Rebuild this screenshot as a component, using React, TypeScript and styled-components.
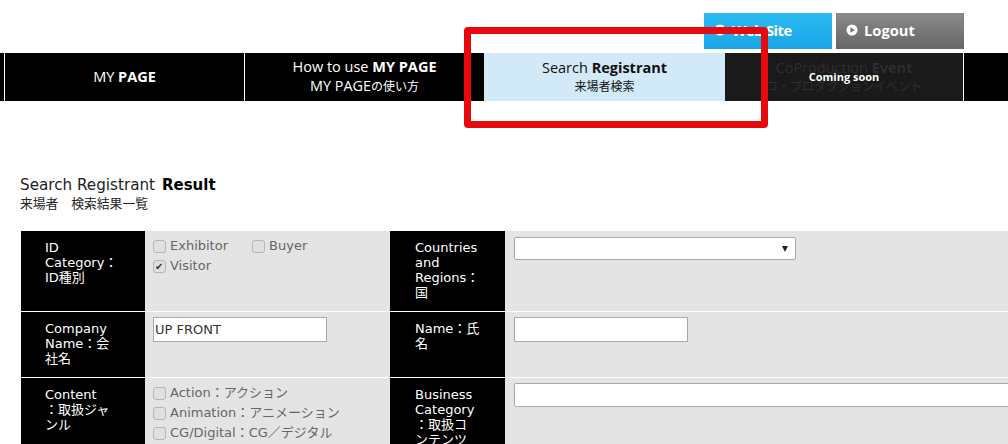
import React from "react";
import styled, { createGlobalStyle } from "styled-components";

const Global = createGlobalStyle`
  html, body { margin: 0; padding: 0; background: #fff; height: 444px; overflow: hidden; }
  #root { height: 444px; overflow: hidden; }
`;

const Page = styled.div`
  position: relative;
  width: 1008px;
  height: 444px;
  overflow: hidden;
  font-family: "DejaVu Sans", "Noto Sans CJK JP", sans-serif;
`;

const TopBar = styled.div`
  display: flex;
  justify-content: flex-end;
  gap: 4px;
  height: 36px;
  padding: 13px 44px 4px 0;
`;

const TopButton = styled.a<{ $from: string; $to: string; $tight?: boolean }>`
  width: 128px;
  height: 36px;
  box-sizing: border-box;
  padding: 0 0 2px 10px;
  display: flex;
  align-items: center;
  gap: 6px;
  background: linear-gradient(${(p) => p.$from}, ${(p) => p.$to});
  color: #fff;
  font: 700 14.7px "Open Sans", "Noto Sans", sans-serif;
  letter-spacing: ${(p) => (p.$tight ? "-0.5px" : "0")};
`;

const Nav = styled.nav`
  display: flex;
  height: 48px;
  background: #000;
  padding-left: 4px;
`;

const NavItem = styled.div<{ $active?: boolean; $muted?: boolean; $w: number }>`
  position: relative;
  flex: 0 0 ${(p) => p.$w}px;
  box-sizing: border-box;
  height: 48px;
  padding-bottom: 1px;
  display: flex;
  flex-direction: column;
  align-items: center;
  justify-content: center;
  border-left: ${(p) => (p.$active || p.$muted ? "0" : "1px solid #fff")};
  background: ${(p) => (p.$active ? "#d2e9f8" : p.$muted ? "#1a1a1a" : "#000")};
  color: ${(p) => (p.$active ? "#111" : p.$muted ? "#2e2e2e" : "#fff")};
  font-family: "Open Sans", "Noto Sans CJK JP", sans-serif;
`;

const NavEnd = styled.div`
  flex: 1;
  border-left: 1px solid #fff;
`;

const NavTitle = styled.span`
  font-size: 14.5px;
  line-height: 20px;
  white-space: nowrap;
  b { font-weight: 700; }
`;

const NavSub = styled.span`
  font-size: 12px;
  line-height: 18px;
  white-space: nowrap;
`;

const NavSubLatin = styled.span`
  font-size: 14.4px;
`;

const Soon = styled.span`
  position: absolute;
  top: 17px;
  left: 0;
  right: 0;
  text-align: center;
  color: #fff;
  font-size: 11px;
  line-height: 14px;
  font-weight: 700;
`;

const Highlight = styled.div`
  position: absolute;
  left: 464px;
  top: 27px;
  width: 304px;
  height: 101px;
  box-sizing: border-box;
  border: 7px solid #e60a0f;
  border-radius: 4px;
`;

const Heading = styled.div`
  padding: 75px 0 0 20px;
  color: #222;
`;

const HeadingTitle = styled.div`
  font-size: 15.2px;
  line-height: 19px;
  b { font-size: 15px; color: #000; margin-left: 2px; }
`;

const HeadingSub = styled.div`
  font-family: "Noto Sans CJK JP", sans-serif;
  font-size: 12.8px;
  line-height: 18px;
  margin-top: -1px;
`;

const FormGrid = styled.div`
  display: grid;
  grid-template-columns: 124px 245px 115px 700px;
  grid-template-rows: 80px 65px 100px;
  row-gap: 1px;
  margin: 19px 0 0 21px;
  width: 1184px;
`;

const LabelCell = styled.div<{ $right?: boolean }>`
  background: #000;
  color: #fff;
  box-sizing: border-box;
  padding: 9px 8px 0 ${(p) => (p.$right ? 25 : 24)}px;
  font-size: 13px;
  line-height: 15px;
  overflow: hidden;
`;

const FieldCell = styled.div<{ $wide?: boolean; $top?: number }>`
  background: #e4e4e4;
  box-sizing: border-box;
  padding: ${(p) => p.$top ?? 5}px 8px 0 ${(p) => (p.$wide ? 9 : 8)}px;
  color: #666;
  font-size: 13px;
  line-height: 20px;
`;

const CheckRow = styled.div`
  display: flex;
  gap: 24px;
  height: 20px;
`;

const CheckLabel = styled.label`
  display: inline-flex;
  align-items: center;
  gap: 4px;
  white-space: nowrap;
`;

const Box = styled.input.attrs({ type: "checkbox", readOnly: true })`
  appearance: none;
  margin: 0;
  width: 13px;
  height: 13px;
  box-sizing: border-box;
  border: 1px solid #b5b5b5;
  border-radius: 3px;
  background: #e0e0e0;
  position: relative;
  &:checked::after {
    content: "✔";
    position: absolute;
    left: 1px;
    top: 0;
    font-size: 10px;
    line-height: 11px;
    color: #333;
  }
`;

const TextBox = styled.input.attrs({ type: "text", readOnly: true })<{ $w: number }>`
  display: block;
  width: ${(p) => p.$w}px;
  height: 25px;
  box-sizing: border-box;
  border: 1px solid #a9a9a9;
  background: #fff;
  padding: 0 1px;
  margin: 0;
  color: #333;
  font: 13px "DejaVu Sans", sans-serif;
  outline: none;
`;

const Wide = styled(TextBox)`
  height: 24px;
  border-radius: 2px;
`;

const SelectBox = styled.div`
  position: relative;
  width: 282px;
  height: 23px;
  box-sizing: border-box;
  border: 1px solid #a9a9a9;
  border-radius: 2px;
  background: #fff;
  &::after {
    content: "";
    position: absolute;
    right: 7px;
    top: 8px;
    border-left: 3px solid transparent;
    border-right: 3px solid transparent;
    border-top: 6px solid #222;
  }
`;

const Check = ({ label, checked }: { label: string; checked?: boolean }) => (
  <CheckLabel>
    <Box defaultChecked={checked} />
    {label}
  </CheckLabel>
);

const PlayIcon = ({ fill }: { fill: string }) => (
  <svg width="12" height="12" viewBox="0 0 12 12">
    <circle cx="6" cy="6" r="5.5" fill="#fff" />
    <path d="M4.4 3.2 L9 6 L4.4 8.8 Z" fill={fill} />
  </svg>
);

export default function App() {
  return (
    <Page>
      <Global />
      <TopBar>
        <TopButton $from="#2abcf2" $to="#1aa4e6" $tight>
          <PlayIcon fill="#1eaeea" />
          Web Site
        </TopButton>
        <TopButton $from="#8a8a8a" $to="#666666">
          <PlayIcon fill="#777" />
          Logout
        </TopButton>
      </TopBar>
      <Nav>
        <NavItem $w={240}>
          <NavTitle>
            MY <b>PAGE</b>
          </NavTitle>
        </NavItem>
        <NavItem $w={240}>
          <NavTitle>
            How to use <b>MY PAGE</b>
          </NavTitle>
          <NavSub>
            <NavSubLatin>MY PAGE</NavSubLatin>の使い方
          </NavSub>
        </NavItem>
        <NavItem $active $w={241}>
          <NavTitle>
            Search <b>Registrant</b>
          </NavTitle>
          <NavSub>来場者検索</NavSub>
        </NavItem>
        <NavItem $muted $w={238}>
          <NavTitle>
            CoProduction <b>Event</b>
          </NavTitle>
          <NavSub>コ・プロダクションイベント</NavSub>
          <Soon>Coming soon</Soon>
        </NavItem>
        <NavEnd />
      </Nav>
      <Heading>
        <HeadingTitle>
          Search Registrant <b>Result</b>
        </HeadingTitle>
        <HeadingSub>来場者　検索結果一覧</HeadingSub>
      </Heading>
      <FormGrid>
        <LabelCell>
          ID
          <br />
          Category：
          <br />
          ID種別
        </LabelCell>
        <FieldCell>
          <CheckRow>
            <Check label="Exhibitor" />
            <Check label="Buyer" />
          </CheckRow>
          <CheckRow>
            <Check label="Visitor" checked />
          </CheckRow>
        </FieldCell>
        <LabelCell $right>
          Countries
          <br />
          and
          <br />
          Regions：
          <br />国
        </LabelCell>
        <FieldCell $wide $top={6}>
          <SelectBox />
        </FieldCell>

        <LabelCell>
          Company
          <br />
          Name：会
          <br />
          社名
        </LabelCell>
        <FieldCell $top={5}>
          <TextBox $w={174} value="UP FRONT" />
        </FieldCell>
        <LabelCell $right>
          Name：氏
          <br />名
        </LabelCell>
        <FieldCell $wide $top={5}>
          <TextBox $w={174} value="" />
        </FieldCell>

        <LabelCell>
          Content
          <br />
          ：取扱ジャ
          <br />
          ンル
        </LabelCell>
        <FieldCell>
          <CheckRow>
            <Check label="Action：アクション" />
          </CheckRow>
          <CheckRow>
            <Check label="Animation：アニメーション" />
          </CheckRow>
          <CheckRow>
            <Check label="CG/Digital：CG／デジタル" />
          </CheckRow>
        </FieldCell>
        <LabelCell $right>
          Business
          <br />
          Category
          <br />
          ：取扱コ
          <br />
          ンテンツ
        </LabelCell>
        <FieldCell $wide $top={5}>
          <Wide $w={680} value="" />
        </FieldCell>
      </FormGrid>
      <Highlight />
    </Page>
  );
}
